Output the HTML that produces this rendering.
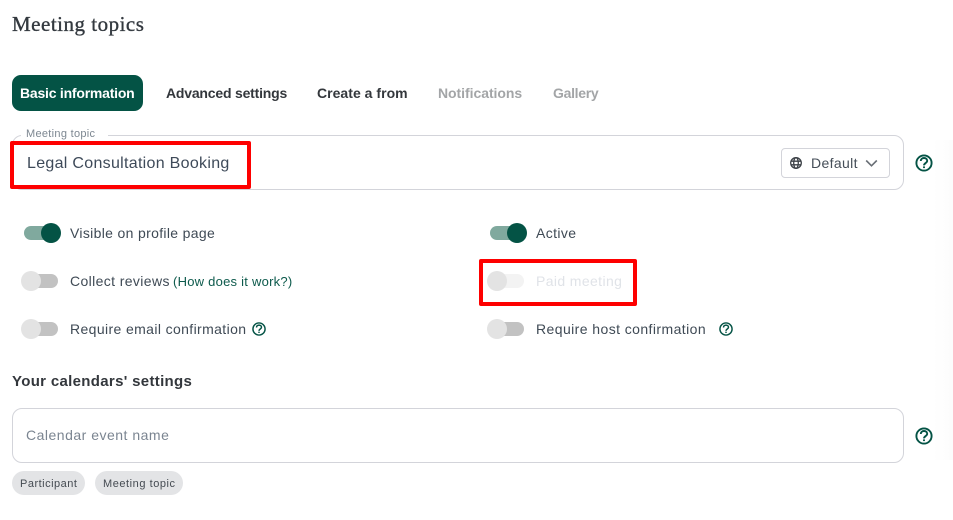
<!DOCTYPE html>
<html><head><meta charset="utf-8"><style>
html,body{margin:0;padding:0;background:#fff}
#p{position:relative;width:953px;height:520px;overflow:hidden;background:#fff;font-family:"Liberation Sans",sans-serif}
.t{position:absolute;white-space:nowrap;line-height:20px}
.lb{font-size:14px;color:#3f4a55;letter-spacing:.38px}
.tab{font-size:14px;font-weight:700;top:83px;color:#33373c}
.b{position:absolute;box-sizing:border-box}
.tr{position:absolute;width:34px;height:14px;border-radius:7px}
.kn{position:absolute;width:20px;height:20px;border-radius:50%}
.on{background:#80a99e}.off{background:#c2c2c2}
svg{position:absolute}
</style></head><body><div id="p">
<div class="b" style="left:933px;top:140px;width:20px;height:320px;background:linear-gradient(90deg,#fff,#fcfcfc)"></div>

<div class="t" style="left:12px;top:12px;font-family:'Liberation Serif',serif;font-size:21px;line-height:24px;color:#33393f;letter-spacing:.5px;-webkit-text-stroke:.35px #33393f">Meeting topics</div>

<div class="b" style="left:12px;top:75px;width:131px;height:36px;border-radius:9px;background:#045345"></div>
<div class="t tab" style="left:20px;color:#fff;letter-spacing:-.22px">Basic information</div>
<div class="t tab" style="left:166px;letter-spacing:-.2px">Advanced settings</div>
<div class="t tab" style="left:317px;letter-spacing:.03px">Create a from</div>
<div class="t tab" style="left:438px;color:#a3a5a7;letter-spacing:-.05px">Notifications</div>
<div class="t tab" style="left:553px;color:#a3a5a7;letter-spacing:-.3px">Gallery</div>

<div class="b" style="left:12px;top:135px;width:892px;height:55px;border:1px solid #d3d4da;border-radius:10px"></div>
<div class="b" style="left:21px;top:130px;width:87px;height:10px;background:#fff"></div>
<div class="t" style="left:26px;top:124px;font-size:11px;color:#7d8791;letter-spacing:.3px">Meeting topic</div>
<div class="t" style="left:27px;top:154px;font-size:16px;color:#3e4a59;letter-spacing:.3px">Legal Consultation Booking</div>

<div class="b" style="left:781px;top:148px;width:109px;height:30px;border:1px solid #d3d4da;border-radius:4px"></div>
<svg style="left:790px;top:157px" width="12" height="12" viewBox="0 0 12 12" fill="none" stroke="#3d4248" stroke-width="1.3"><circle cx="6" cy="6" r="5.3" fill="#fff"/><ellipse cx="6" cy="6" rx="2.3" ry="5.3"/><path d="M.8 4.2h10.4M.8 7.8h10.4"/></svg>
<div class="t" style="left:811px;top:153px;font-size:14px;color:#454e58;letter-spacing:.35px">Default</div>
<svg style="left:865px;top:159px" width="13" height="9" viewBox="0 0 13 9" fill="none" stroke="#686e75" stroke-width="1.6"><path d="M1.2 1.5L6.5 6.8 11.8 1.5"/></svg>
<svg style="left:915px;top:154px" width="18" height="18" viewBox="0 0 18 18" fill="none" stroke="#045345" stroke-width="1.9"><circle cx="9" cy="9" r="7.6"/><path d="M5.8 7c0-1.9 1.4-3 3.2-3s3.2 1.1 3.2 2.8c0 2.3-3.2 2.2-3.2 4.6"/><path d="M9 12.4v1.7"/></svg>

<div class="tr on" style="left:24px;top:226px"></div><div class="kn" style="left:41px;top:223px;background:#045345"></div>
<div class="t lb" style="left:70px;top:223px;letter-spacing:.33px">Visible on profile page</div>
<div class="tr on" style="left:490px;top:226px"></div><div class="kn" style="left:507px;top:223px;background:#045345"></div>
<div class="t lb" style="left:536px;top:223px">Active</div>

<div class="tr off" style="left:24px;top:274px"></div><div class="kn" style="left:21px;top:271px;background:#e3e3e3"></div>
<div class="t lb" style="left:70px;top:271px">Collect reviews</div>
<div class="t" style="left:173px;top:272px;font-size:13px;color:#0d5a4c;letter-spacing:.24px">(How does it work?)</div>
<div class="tr" style="left:490px;top:274px;background:#f3f3f3"></div><div class="kn" style="left:487px;top:271px;background:#e3e3e3"></div>
<div class="t lb" style="left:536px;top:271px;color:#e0e3e8">Paid meeting</div>

<div class="tr off" style="left:24px;top:322px"></div><div class="kn" style="left:21px;top:319px;background:#e3e3e3"></div>
<div class="t lb" style="left:70px;top:319px">Require email confirmation</div>
<svg style="left:252px;top:322px" width="14" height="14" viewBox="0 0 18 18" fill="none" stroke="#045345" stroke-width="1.9"><circle cx="9" cy="9" r="7.8"/><path d="M5.8 7c0-1.9 1.4-3 3.2-3s3.2 1.1 3.2 2.8c0 2.3-3.2 2.2-3.2 4.6"/><path d="M9 12.4v1.7"/></svg>
<div class="tr off" style="left:490px;top:322px"></div><div class="kn" style="left:487px;top:319px;background:#e3e3e3"></div>
<div class="t lb" style="left:536px;top:319px;letter-spacing:.42px">Require host confirmation</div>
<svg style="left:719px;top:322px" width="14" height="14" viewBox="0 0 18 18" fill="none" stroke="#045345" stroke-width="1.9"><circle cx="9" cy="9" r="7.8"/><path d="M5.8 7c0-1.9 1.4-3 3.2-3s3.2 1.1 3.2 2.8c0 2.3-3.2 2.2-3.2 4.6"/><path d="M9 12.4v1.7"/></svg>

<div class="t" style="left:12px;top:372px;font-size:15px;font-weight:700;color:#33373c;letter-spacing:.32px">Your calendars' settings</div>

<div class="b" style="left:12px;top:408px;width:892px;height:55px;border:1px solid #d3d4da;border-radius:10px"></div>
<div class="t" style="left:26px;top:425px;font-size:14px;color:#7b8591;letter-spacing:.5px">Calendar event name</div>
<svg style="left:915px;top:427px" width="18" height="18" viewBox="0 0 18 18" fill="none" stroke="#045345" stroke-width="1.9"><circle cx="9" cy="9" r="7.6"/><path d="M5.8 7c0-1.9 1.4-3 3.2-3s3.2 1.1 3.2 2.8c0 2.3-3.2 2.2-3.2 4.6"/><path d="M9 12.4v1.7"/></svg>

<div class="b" style="left:12px;top:471px;width:73px;height:24px;border-radius:12px;background:#e3e4e6"></div>
<div class="t" style="left:20px;top:474px;font-size:11px;color:#454b52;letter-spacing:.5px">Participant</div>
<div class="b" style="left:95px;top:471px;width:88px;height:24px;border-radius:12px;background:#e3e4e6"></div>
<div class="t" style="left:103px;top:474px;font-size:11px;color:#454b52;letter-spacing:.55px">Meeting topic</div>

<div class="b" style="left:10px;top:141px;width:241px;height:48px;border:4px solid #fe0000;border-radius:2px"></div>
<div class="b" style="left:479px;top:259px;width:158px;height:47px;border:4px solid #fe0000;border-radius:2px"></div>
</div></body></html>
